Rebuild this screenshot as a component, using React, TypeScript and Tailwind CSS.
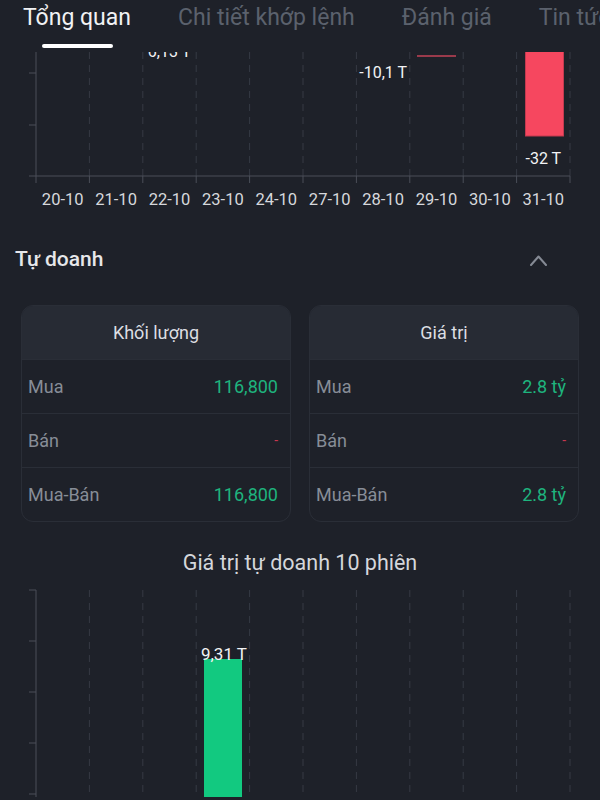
const GRID_X = Array.from({ length: 11 }, (_, i) => 36 + i * 53.4);
const DATES = ["20-10", "21-10", "22-10", "23-10", "24-10", "27-10", "28-10", "29-10", "30-10", "31-10"];
const AXIS = "#4b4f59";
const GRID = "#363a44";

function colCenter(i: number) {
	return 36 + i * 53.4 + 26.7;
}

function Tabs() {
	const tabs = ["Tổng quan", "Chi tiết khớp lệnh", "Đánh giá", "Tin tức"];
	return (
		<div className="flex h-[52px] gap-[47px] overflow-hidden whitespace-nowrap pl-[23px]">
			{tabs.map((t, i) => (
				<div key={t} className="flex shrink-0 flex-col items-center pt-[4px]">
					<span className={`text-[23px] leading-[28px] ${i === 0 ? "text-[#f1f2f4]" : "text-[#5b616d]"}`}>{t}</span>
					{i === 0 && <span className="mt-[12px] h-[4px] w-[71px] rounded-full bg-white" />}
				</div>
			))}
		</div>
	);
}

function TopChart() {
	return (
		<svg width={600} height={168} className="block">
			{GRID_X.slice(1).map((x) => (
				<line key={x} x1={x} x2={x} y1={0} y2={124} stroke={GRID} strokeWidth={1} strokeDasharray="7 6" />
			))}
			<line x1={36} x2={36} y1={0} y2={124} stroke={AXIS} strokeWidth={1} />
			<line x1={29} x2={570} y1={124} y2={124} stroke={AXIS} strokeWidth={1} />
			{[21, 73].map((y) => (
				<line key={y} x1={29} x2={36} y1={y} y2={y} stroke={AXIS} strokeWidth={1} />
			))}
			{GRID_X.map((x) => (
				<line key={`t${x}`} x1={x} x2={x} y1={124} y2={131} stroke={AXIS} strokeWidth={1} />
			))}
			<rect x={417} y={3} width={39} height={2} fill="#9a3a4b" />
			<rect x={525.5} y={-10} width={38} height={94} fill="#f6475f" stroke="#c23a4f" strokeWidth={1} />
			{/* value label of 22-10 sits mostly under the tab bar */}
			<g fontFamily="Roboto, sans-serif" fontSize={16} fill="#f2f3f5" textAnchor="middle">
				<text x={colCenter(2)} y={5}>6,13 T</text>
				<text x={colCenter(6)} y={26}>-10,1 T</text>
				<text x={colCenter(9)} y={112}>-32 T</text>
			</g>
			<g fontFamily="Roboto, sans-serif" fontSize={16.5} fill="#d6d8dc" textAnchor="middle">
				{DATES.map((d, i) => (
					<text key={d} x={colCenter(i)} y={153}>
						{d}
					</text>
				))}
			</g>
		</svg>
	);
}

function BottomChart() {
	return (
		<svg width={600} height={220} className="block">
			{GRID_X.slice(1).map((x) => (
				<line key={x} x1={x} x2={x} y1={13} y2={220} stroke={GRID} strokeWidth={1} strokeDasharray="7 6" />
			))}
			<line x1={36} x2={36} y1={13} y2={220} stroke={AXIS} strokeWidth={1} />
			{[13, 64, 115, 166, 217].map((y) => (
				<line key={y} x1={29} x2={36} y1={y} y2={y} stroke={AXIS} strokeWidth={1} />
			))}
			<rect x={204} y={82} width={38} height={140} fill="#12c980" />
			<text x={224} y={83} fontFamily="Roboto, sans-serif" fontSize={17} fill="#f2f3f5" textAnchor="middle">
				9,31 T
			</text>
		</svg>
	);
}

interface Row {
	label: string;
	value: string;
	up: boolean;
}

function StatCard({ title, rows }: { title: string; rows: Row[] }) {
	return (
		<div className="overflow-hidden rounded-[12px] border border-[#2a2e37]">
			<div className="flex h-[53px] items-center justify-center bg-[#272b34] text-[18px] text-[#dcdee2]">{title}</div>
			{rows.map((r) => (
				<div key={r.label} className="flex h-[54px] items-center justify-between border-t border-[#2a2e37] pl-[6px] pr-[12px] text-[18px]">
					<span className="text-[#878d97]">{r.label}</span>
					<span className={r.up ? "text-[#1eb47e]" : "text-[14px] text-[#c6374f]"}>{r.value}</span>
				</div>
			))}
		</div>
	);
}

export default function App() {
	return (
		<div className="h-[800px] w-[600px] overflow-hidden bg-[#1e2129] font-['Roboto',sans-serif]">
			<Tabs />
			<TopChart />
			<div className="flex h-[80px] items-center justify-between pl-[15px] pr-[53px]">
				<span className="text-[21px] font-medium text-[#e6e7ea]">Tự doanh</span>
				<svg width={17} height={11} viewBox="0 0 17 11">
					<polyline points="1,10 8.5,1.5 16,10" fill="none" stroke="#858a94" strokeWidth={2} strokeLinecap="round" strokeLinejoin="round" />
				</svg>
			</div>
			<div className="mt-[5px] grid grid-cols-2 gap-[18px] px-[21px]">
				<StatCard
					title="Khối lượng"
					rows={[
						{ label: "Mua", value: "116,800", up: true },
						{ label: "Bán", value: "-", up: false },
						{ label: "Mua-Bán", value: "116,800", up: true },
					]}
				/>
				<StatCard
					title="Giá trị"
					rows={[
						{ label: "Mua", value: "2.8 tỷ", up: true },
						{ label: "Bán", value: "-", up: false },
						{ label: "Mua-Bán", value: "2.8 tỷ", up: true },
					]}
				/>
			</div>
			<div className="pt-[27px] text-center text-[21.5px] leading-[28px] text-[#d5d7db]">Giá trị tự doanh 10 phiên</div>
			<BottomChart />
		</div>
	);
}
